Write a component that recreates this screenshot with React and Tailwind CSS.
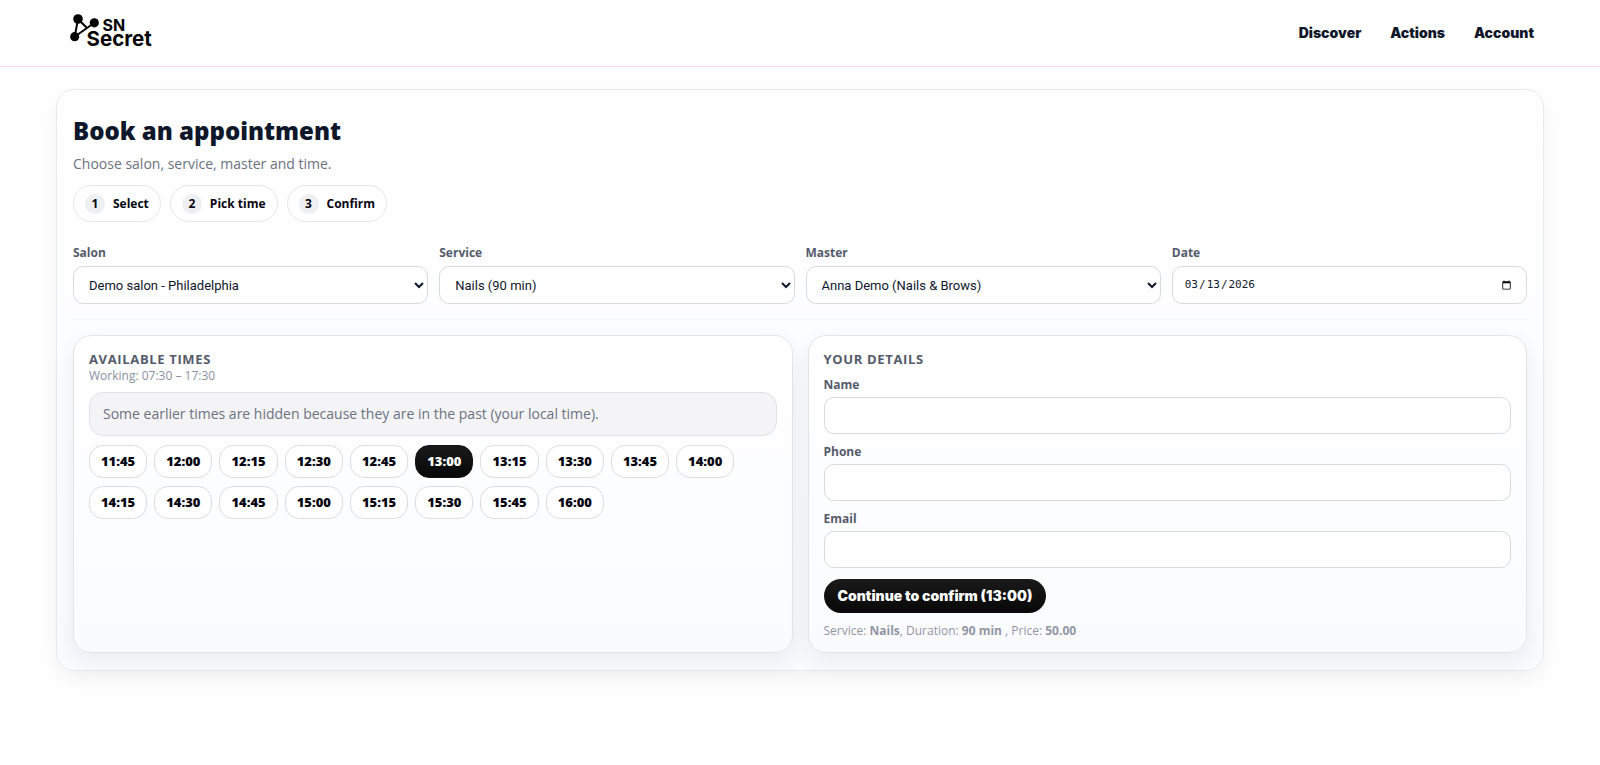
import React, { useState } from "react";

const FIELD =
  "w-full rounded-[10px] border border-[#d9dadf] bg-white text-[#0f172a] outline-none";
const LABEL = "text-xs leading-[18px] font-bold text-[#555b6b]";

const SELECTS = [
  { id: "salon", label: "Salon", options: ["Demo salon - Philadelphia"] },
  { id: "service", label: "Service", options: ["Nails (90 min)"] },
  { id: "master", label: "Master", options: ["Anna Demo (Nails & Brows)"] },
];

const TIMES = [
  "11:45", "12:00", "12:15", "12:30", "12:45", "13:00", "13:15", "13:30", "13:45",
  "14:00", "14:15", "14:30", "14:45", "15:00", "15:15", "15:30", "15:45", "16:00",
];

const DETAILS = [
  { id: "name", label: "Name", type: "text" },
  { id: "phone", label: "Phone", type: "tel" },
  { id: "email", label: "Email", type: "email" },
];

function Logo() {
  return (
    <svg
      width="84"
      height="36"
      viewBox="0 0 84 36"
      role="img"
      aria-label="SN Secret"
      className="overflow-visible"
    >
      <g stroke="#050505" strokeWidth="2" fill="none">
        <path d="M8 4 4.7 21.7 24.3 7.8M8 4 17.5 13.5" />
      </g>
      <g fill="#050505">
        <circle cx="8" cy="4" r="4.8" />
        <circle cx="24.3" cy="7.8" r="4.6" />
        <circle cx="4.7" cy="21.7" r="4.6" />
      </g>
      <text fill="#050505" fontFamily="Inter, sans-serif" fontWeight="700">
        <tspan x="32.5" y="15.8" fontSize="16">SN</tspan>
        <tspan x="16.5" y="30.5" fontSize="20.5">Secret</tspan>
      </text>
    </svg>
  );
}

function Panel({ title, children }) {
  return (
    <section className="flex min-w-0 flex-col rounded-[18px] border border-[#e3e4ea] bg-linear-to-b from-white to-[#fafbff] px-[15px] pt-[14px] pb-[13px] shadow-[0_8px_24px_rgba(15,23,42,0.07)]">
      <h2 className="text-[13px] leading-[18px] font-bold tracking-wider text-[#555b6b] uppercase">
        {title}
      </h2>
      {children}
    </section>
  );
}

export default function App() {
  const [time, setTime] = useState("13:00");

  return (
    <div className="min-h-screen bg-white font-['Open_Sans',sans-serif] text-[#0f172a]">
      <header className="flex h-[67px] items-center justify-between border-b border-[#f8d7de] px-[66px]">
        <a href="#" className="ml-1 block">
          <Logo />
        </a>
        <nav className="flex gap-[29px] font-['Inter',sans-serif] text-sm font-black">
          <a href="#discover">Discover</a>
          <a href="#actions">Actions</a>
          <a href="#account">Account</a>
        </nav>
      </header>

      <main className="mx-14 mt-[22px] rounded-[18px] border border-[#e7e8ea] bg-linear-to-b from-white to-[#fafbff] px-4 pt-6 pb-[17px] shadow-[0_8px_24px_rgba(15,23,42,0.06)]">
        <h1 className="text-2xl leading-[34px] font-extrabold">Book an appointment</h1>
        <p className="mt-[6px] text-sm leading-5 text-[#6b7280]">
          Choose salon, service, master and time.
        </p>

        <ol className="mt-[11px] flex gap-[9px]">
          {["Select", "Pick time", "Confirm"].map((step, i) => (
            <li
              key={step}
              className="flex h-[37px] items-center gap-2 rounded-full border border-[#e5e6e9] bg-white px-[11px] text-xs font-bold text-[#050510]"
            >
              <span className="flex size-5 items-center justify-center rounded-full bg-[#eeeff1]">
                {i + 1}
              </span>
              {step}
            </li>
          ))}
        </ol>

        <div className="mt-[22px] grid grid-cols-4 gap-[11px] border-b border-[#f4f5f8] pb-[15px]">
          {SELECTS.map((s) => (
            <div key={s.id} className="flex flex-col gap-1">
              <label htmlFor={s.id} className={LABEL}>{s.label}</label>
              <select
                id={s.id}
                className={`${FIELD} h-[38px] pl-[11px] font-['Roboto',sans-serif] text-[13px]`}
              >
                {s.options.map((o) => (
                  <option key={o}>{o}</option>
                ))}
              </select>
            </div>
          ))}
          <div className="flex flex-col gap-1">
            <label htmlFor="date" className={LABEL}>Date</label>
            <input
              id="date"
              type="date"
              defaultValue="2026-03-13"
              className={`${FIELD} h-[38px] pr-3 pl-[11px] font-['DejaVu_Sans_Mono',monospace] text-[11px]`}
            />
          </div>
        </div>

        <div className="mt-[15px] grid grid-cols-2 gap-[15px]">
          <Panel title="Available times">
            <p className="text-xs leading-4 text-[#8b90a0]">Working: 07:30 – 17:30</p>
            <p className="mt-2 rounded-[14px] border border-[#e1e2e7] bg-[#f4f4f6] px-[13px] py-[11px] text-sm leading-5 text-[#6b7280]">
              Some earlier times are hidden because they are in the past (your local time).
            </p>
            <div className="mt-[9px] flex flex-wrap gap-x-[7px] gap-y-2">
              {TIMES.map((t) => (
                <button
                  key={t}
                  type="button"
                  aria-pressed={t === time}
                  onClick={() => setTime(t)}
                  className={`h-[33px] rounded-[14px] border px-[11px] text-[13px] font-extrabold ${
                    t === time
                      ? "border-[#111111] bg-linear-to-b from-[#1a1a1a] to-[#080808] text-white"
                      : "border-[#dcdde1] bg-white text-[#050510]"
                  }`}
                >
                  {t}
                </button>
              ))}
            </div>
          </Panel>

          <Panel title="Your details">
            <form className="mt-2 flex flex-col" onSubmit={(e) => e.preventDefault()}>
              <div className="flex flex-col gap-[9px]">
                {DETAILS.map((d) => (
                  <div key={d.id} className="flex flex-col gap-[3px]">
                    <label htmlFor={d.id} className={LABEL}>{d.label}</label>
                    <input
                      id={d.id}
                      type={d.type}
                      className={`${FIELD} h-[37px] px-3 text-[13px]`}
                    />
                  </div>
                ))}
              </div>
              <button
                type="submit"
                className="mt-[11px] h-[34px] self-start rounded-full bg-linear-to-b from-[#1a1a1a] to-[#080808] px-[14px] font-['Inter',sans-serif] text-sm font-black text-white"
              >
                Continue to confirm ({time})
              </button>
              <p className="mt-[10px] text-xs leading-4 text-[#9296a3]">
                Service: <b>Nails</b>, Duration: <b>90 min</b> , Price: <b>50.00</b>
              </p>
            </form>
          </Panel>
        </div>
      </main>
    </div>
  );
}
